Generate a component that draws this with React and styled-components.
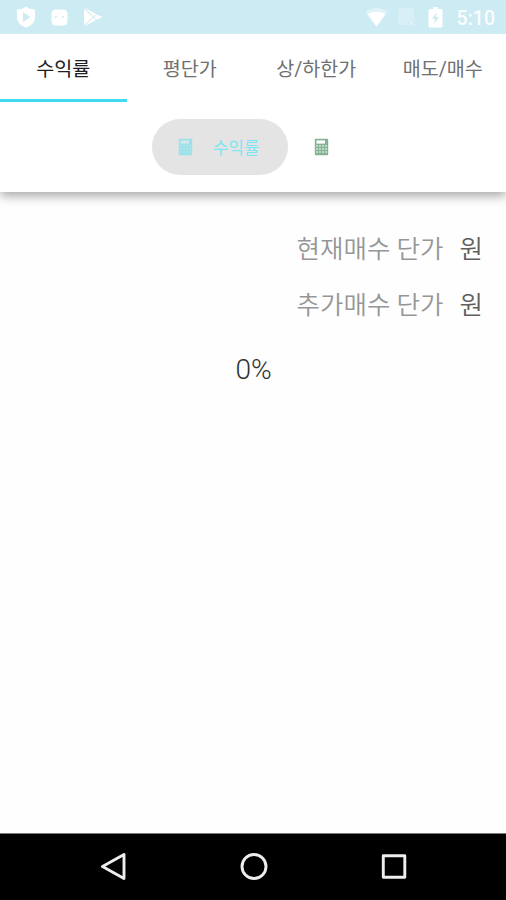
import React from "react";
import styled, { createGlobalStyle } from "styled-components";

const GlobalStyle = createGlobalStyle`
  * { box-sizing: border-box; }
  body { margin: 0; background: #fff; }
`;

const Screen = styled.div`
  width: 506px;
  height: 900px;
  display: flex;
  flex-direction: column;
  overflow: hidden;
  background: #fefefe;
  font-family: Roboto, "Noto Sans CJK KR", sans-serif;
`;

const StatusBar = styled.header`
  height: 34px;
  flex: none;
  display: flex;
  align-items: center;
  justify-content: space-between;
  padding: 0 11px 0 16px;
  background: #cdebf3;
  color: #fff;
`;

const Notifications = styled.div`
  display: flex;
  align-items: center;
  gap: 15px;
`;

const Indicators = styled.div`
  display: flex;
  align-items: center;
`;

const StatusIcon = styled.svg`
  display: block;
  flex: none;
  fill: #fff;
  margin-right: ${(p) => p.$after || 0}px;
`;

const Clock = styled.time`
  font-size: 19.5px;
  line-height: 38px;
  font-weight: 500;
  height: 34px;
  opacity: 0.92;
`;

const AppBar = styled.div`
  position: relative;
  height: 158px;
  flex: none;
  background: #fff;
  box-shadow: 0 4px 10px rgba(0, 0, 0, 0.34);
  clip-path: inset(0 0 -18px 0);
`;

const Tabs = styled.nav`
  display: grid;
  grid-template-columns: repeat(4, 1fr);
  height: 68px;
`;

const Tab = styled.div`
  height: 68px;
  border-bottom: 3px solid ${(p) => (p.$active ? "#3fdcf0" : "transparent")};
  color: ${(p) => (p.$active ? "#202020" : "#707070")};
  font-size: 19.6px;
  line-height: 72px;
  text-align: center;
  white-space: nowrap;
`;

const Chips = styled.div`
  display: flex;
  align-items: center;
  height: 56px;
  margin: 17px 0 0 152px;
`;

const Chip = styled.div`
  display: flex;
  align-items: center;
  width: 136px;
  height: 56px;
  padding-left: 26px;
  border-radius: 28px;
  background: #e4e4e4;
  color: #7ee5f2;
  font-size: 16.8px;
  line-height: 58px;
  font-weight: 400;
`;

const ChipLabel = styled.span`
  margin: 2px 0 0 20px;
`;

const SecondaryAction = styled.div`
  margin-left: 26px;
`;

const Content = styled.main`
  flex: 1;
  padding-top: 30px;
`;

const FieldRow = styled.div`
  display: flex;
  justify-content: flex-end;
  gap: 16px;
  height: 56px;
  padding-right: 23px;
  font-size: 25.5px;
  font-weight: 350;
  line-height: 54px;
`;

const Placeholder = styled.span`
  color: #969696;
`;

const Unit = styled.span`
  color: #606060;
`;

const Result = styled.div`
  height: 50px;
  margin: 11px 0 0 1px;
  color: #303030;
  font-size: 28px;
  font-weight: 300;
  line-height: 50px;
  text-align: center;
`;

const NavigationBar = styled.footer`
  display: flex;
  justify-content: center;
  gap: 112px;
  height: 67px;
  flex: none;
  padding: 19px 0 0 1px;
  border-top: 1px solid #777;
  background: #000;
`;

const NavIcon = styled.svg`
  width: 28px;
  height: 28px;
  fill: none;
  stroke: #eee;
  stroke-width: 2.9;
  stroke-linejoin: round;
`;

const CalculatorSvg = styled.svg`
  display: block;
  color: ${(p) => p.$color};
`;

function Calculator({ color, screen, keys }) {
  return (
    <CalculatorSvg $color={color} width="15" height="18" viewBox="0 0 15 18">
      <rect x="0.8" y="0.8" width="13.4" height="16.4" rx="1" fill="currentColor" />
      <rect x="2.5" y="2.4" width="8.5" height="3.2" fill={screen} />
      {[8, 11, 14].map((y) =>
        [3, 6, 9, 12].map((x) => (
          <circle key={`${x}-${y}`} cx={x} cy={y} r="1.05" fill={keys} />
        ))
      )}
    </CalculatorSvg>
  );
}

const tabs = ["수익률", "평단가", "상/하한가", "매도/매수"];
const fields = ["현재매수 단가", "추가매수 단가"];

export default function App() {
  return (
    <Screen>
      <GlobalStyle />
      <StatusBar>
        <Notifications>
          <StatusIcon width="20" height="22" viewBox="0 0 20 22">
            <path
              fillRule="evenodd"
              d="M10 .5 13 2.5 19 3.8V11C19 16.5 15 20 10 21.5 5 20 1 16.5 1 11V3.8L7 2.5ZM7 6V16L14.5 11Z"
            />
          </StatusIcon>
          <StatusIcon width="17" height="17" viewBox="0 0 17 17">
            <path
              fillRule="evenodd"
              d="M5 .5H12Q16.5.5 16.5 5V12Q16.5 16.5 12 16.5H5Q.5 16.5.5 12V5Q.5.5 5 .5ZM4 8A.9.9 0 1 0 5.8 8 .9.9 0 1 0 4 8ZM11.2 8A.9.9 0 1 0 13 8 .9.9 0 1 0 11.2 8Z"
            />
          </StatusIcon>
          <StatusIcon width="20" height="20" viewBox="0 0 20 20">
            <path d="M1 .5 13.2 7 10.5 9.5ZM1 2 9.8 10 1 18ZM1 19.5 10.5 10.5 13.2 13ZM14 7.4 19.5 10 14 12.6 11.2 10Z" />
          </StatusIcon>
        </Notifications>
        <Indicators>
          <StatusIcon $after={10} width="23" height="20" viewBox="0 0 23 20">
            <path opacity=".4" d="M0 5Q11.5-3 23 5L11.5 20Z" />
            <path d="M2.8 7Q11.5 2.5 20.2 7L11.5 19.5Z" />
          </StatusIcon>
          <StatusIcon $after={12} width="18" height="20" viewBox="0 0 18 20">
            <path opacity=".22" d="M0 18V3Q0 1 2 1H16V12H10V18Z" />
            <path opacity=".4" d="m10 13 1-1 2.5 2.5L16 12l1 1-2.5 2.5L17 18l-1 1-2.5-2.5L11 19l-1-1 2.5-2.5Z" />
          </StatusIcon>
          <StatusIcon $after={14} width="15" height="21" viewBox="0 0 15 21">
            <path
              fillRule="evenodd"
              d="M5 0H10V2H13Q14.5 2 14.5 3.5V19Q14.5 20.5 13 20.5H2Q.5 20.5.5 19V3.5Q.5 2 2 2H5ZM9 5 4 12H7L6 17 11 10H8Z"
            />
          </StatusIcon>
          <Clock>5:10</Clock>
        </Indicators>
      </StatusBar>
      <AppBar>
        <Tabs>
          {tabs.map((label, i) => (
            <Tab key={label} $active={i === 0}>
              {label}
            </Tab>
          ))}
        </Tabs>
        <Chips>
          <Chip>
            <Calculator color="#9ae1ea" screen="#d3e8eb" keys="#b4e3e9" />
            <ChipLabel>수익률</ChipLabel>
          </Chip>
          <SecondaryAction>
            <Calculator color="#83b394" screen="#fff" keys="#cfe3d4" />
          </SecondaryAction>
        </Chips>
      </AppBar>
      <Content>
        {fields.map((label) => (
          <FieldRow key={label}>
            <Placeholder>{label}</Placeholder>
            <Unit>원</Unit>
          </FieldRow>
        ))}
        <Result>0%</Result>
      </Content>
      <NavigationBar>
        <NavIcon viewBox="0 0 28 28">
          <path d="M2.5 13.5 24 1.5V25.5Z" />
        </NavIcon>
        <NavIcon viewBox="0 0 28 28">
          <circle cx="14" cy="13.5" r="12" />
        </NavIcon>
        <NavIcon viewBox="0 0 28 28">
          <rect x="3.3" y="2.7" width="21.5" height="21.5" />
        </NavIcon>
      </NavigationBar>
    </Screen>
  );
}
